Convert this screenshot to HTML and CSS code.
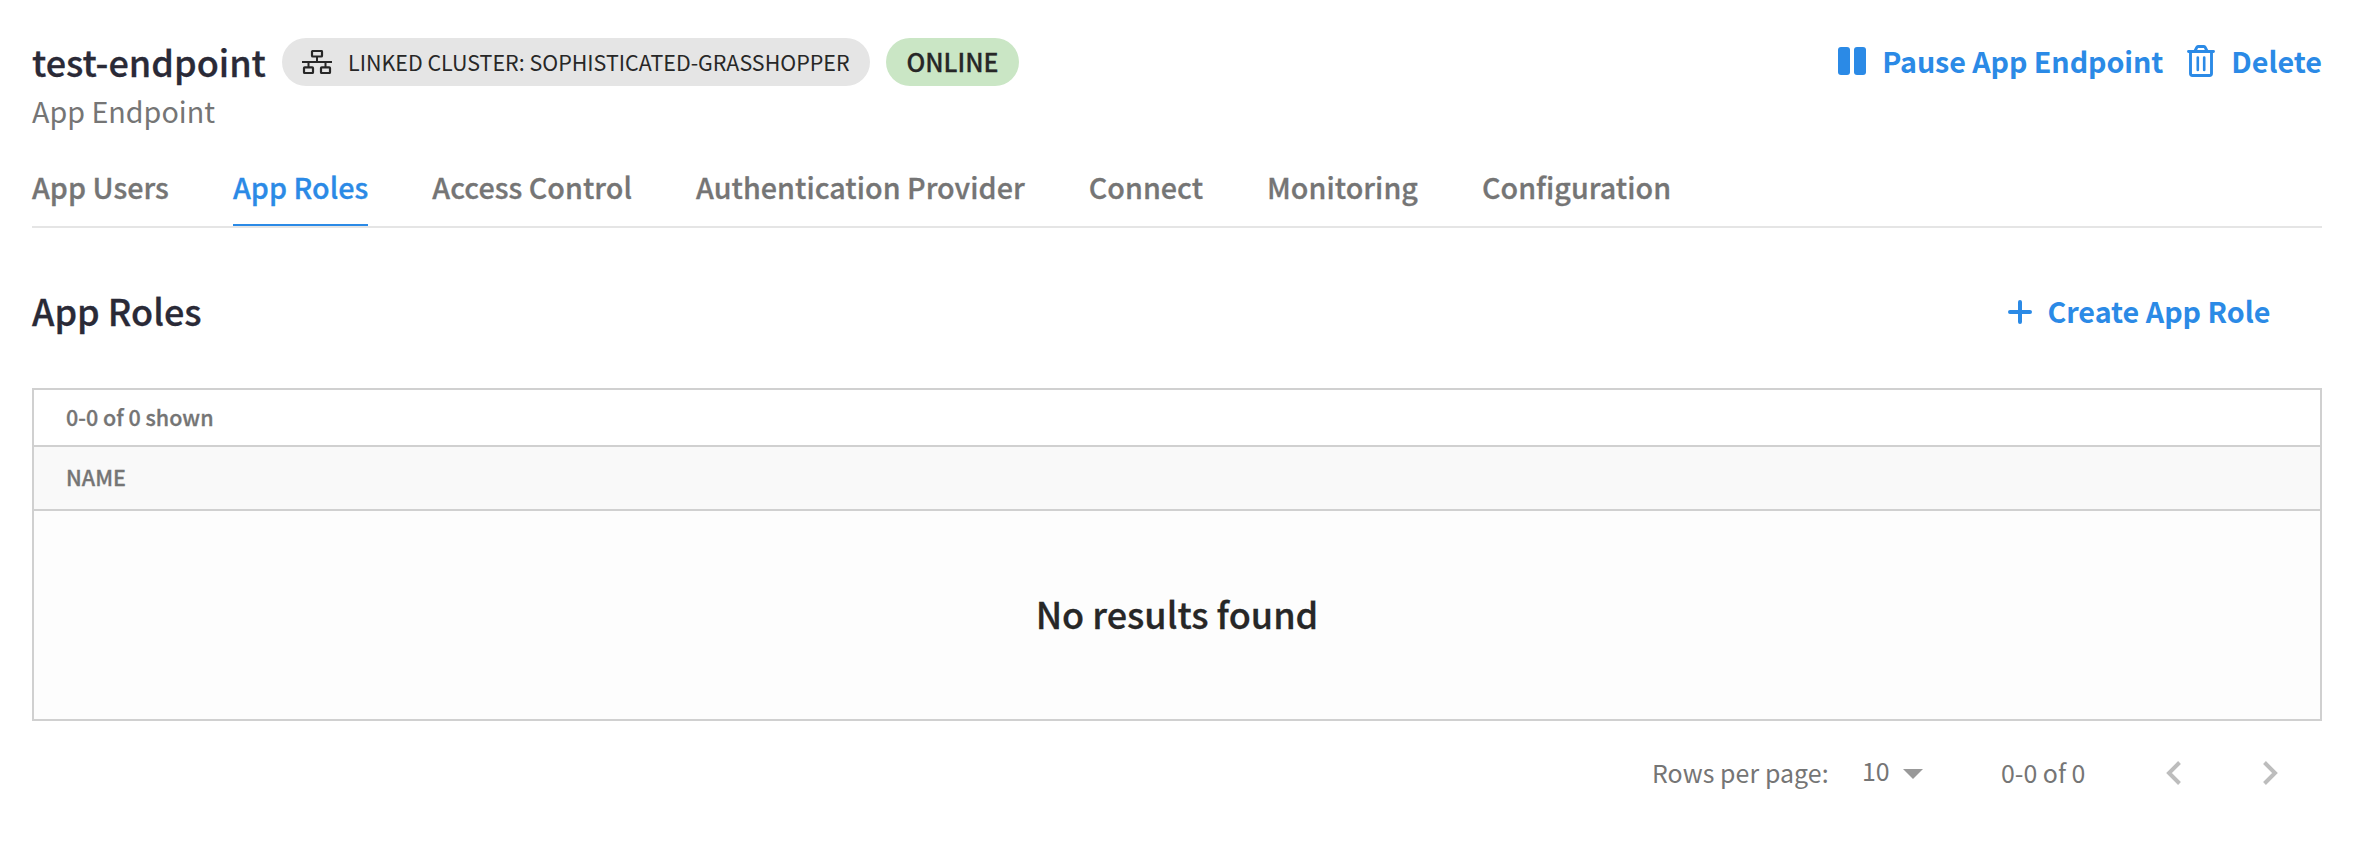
FILE: index.html
```html
<!DOCTYPE html>
<html lang="en">
<head>
<meta charset="utf-8">
<title>test-endpoint</title>
<link rel="stylesheet" href="styles.css">
</head>
<body>
<main class="page">
  <header class="header">
    <div class="heading">
      <h1 class="title">test-endpoint</h1>
      <span class="pill">
        <svg class="cluster-icon" width="30" height="24" viewBox="0 0 30 24" fill="none" stroke="#272727"><rect x="10" y="1" width="10" height="5.500" rx=".8" stroke-width="2.200"/><path d="M15 6.500V12M0 12H30M6.500 12V17M23.500 12V17" stroke-width="2"/><rect x="2" y="17.300" width="9" height="5.700" rx=".8" stroke-width="2.200"/><rect x="19" y="17.300" width="9" height="5.700" rx=".8" stroke-width="2.200"/></svg>
        <span class="pill-text">LINKED CLUSTER: SOPHISTICATED-GRASSHOPPER</span>
      </span>
      <span class="status">ONLINE</span>
    </div>
    <div class="actions">
      <button class="action"><svg class="pause-icon" width="28" height="28" viewBox="0 0 28 28" fill="currentColor"><rect width="12" height="28" rx="3"/><rect x="16" width="12" height="28" rx="3"/></svg><span class="t-pause">Pause App Endpoint</span></button>
      <button class="action"><svg class="trash-icon" width="28" height="32" viewBox="0 0 28 32" fill="none" stroke="currentColor"><path d="M1.500 6.500H26.500M8 6L9.800 2.300Q10.200 1.500 11 1.500H17Q17.800 1.500 18.200 2.300L20 6M3.500 7V28.500Q3.500 30.500 5.500 30.500H22.500Q24.500 30.500 24.500 28.500V7" stroke-width="2.900" stroke-linecap="round"/><path d="M10.800 12.500V25M17.200 12.500V25" stroke-width="2.600" stroke-linecap="round"/></svg><span class="t-delete">Delete</span></button>
    </div>
  </header>
  <p class="subtitle">App Endpoint</p>
  <nav class="tabs">
    <a class="tab">App Users</a>
    <a class="tab active">App Roles</a>
    <a class="tab">Access Control</a>
    <a class="tab">Authentication Provider</a>
    <a class="tab">Connect</a>
    <a class="tab">Monitoring</a>
    <a class="tab">Configuration</a>
  </nav>
  <section class="section-head">
    <h2 class="section-title">App Roles</h2>
    <button class="action create"><svg class="plus-icon" width="24" height="24" viewBox="0 0 24 24" stroke="currentColor" stroke-width="4" stroke-linecap="round"><path d="M2 12H22M12 2V22"/></svg><span class="t-create">Create App Role</span></button>
  </section>
  <section class="table">
    <div class="count">0-0 of 0 shown</div>
    <div class="columns">NAME</div>
    <div class="empty">No results found</div>
  </section>
  <footer class="pager">
    <span class="rows-label">Rows per page:</span>
    <span class="rows-value">10</span>
    <svg class="caret" width="20" height="10" viewBox="0 0 20 10"><path d="M0 0H20L10 10Z" fill="#999"/></svg>
    <span class="range">0-0 of 0</span>
    <svg class="chev" width="15" height="24" viewBox="0 0 15 24" fill="none" stroke="#bdbdbd" stroke-width="4"><path d="M13.500 1.500L3 12L13.500 22.500"/></svg>
    <svg class="chev next" width="15" height="24" viewBox="0 0 15 24" fill="none" stroke="#bdbdbd" stroke-width="4"><path d="M1.500 1.500L12 12L1.500 22.500"/></svg>
  </footer>
</main>
</body>
</html>
```
FILE: styles.css
```css
* { box-sizing: border-box; }
body { margin: 0; background: #fff; color: #272727; font-family: "Noto Sans CJK SC", "Open Sans", sans-serif; }
h1, h2, p { margin: 0; }
button { border: 0; padding: 0; background: none; font: inherit; color: inherit; }
svg { display: block; flex: none; }
.page { width: 2290px; margin-left: 32px; padding-top: 38px; white-space: nowrap; }
.title, .status, .tab, .section-title, .table { -webkit-text-stroke: .3px currentColor; }
.header { display: flex; justify-content: space-between; height: 48px; }
.heading { display: flex; align-items: center; }
.title { width: 250px; padding-bottom: 2px; color: #2a2a37; font-size: 36px; font-weight: 500; line-height: 46px; }
.pill { display: flex; align-items: center; width: 588px; height: 48px; padding-left: 20px; border-radius: 24px; background: #e5e5e5; }
.pill-text { margin-left: 16px; font-size: 21.450px; line-height: 48px; }
.status { width: 133px; height: 48px; margin-left: 16px; border-radius: 24px; background: #cae6c5; text-align: center; font-size: 25px; font-weight: 500; line-height: 47px; }
.actions { display: flex; gap: 24px; }
.action { display: flex; align-items: center; color: #2b8ae6; font-size: 28.700px; font-weight: 700; line-height: 46px; }
.action span { padding-bottom: 2px; }
.pause-icon { margin: -2px 16px 0 0; }
.trash-icon { margin: -2px 16px 0 0; }
.t-pause { letter-spacing: -.08px; }
.subtitle { height: 52px; color: #757575; font-size: 28.700px; line-height: 50px; }
.tabs { display: flex; gap: 64px; height: 90px; border-bottom: 2px solid #e5e5e5; }
.tab { height: 88px; padding-top: 25px; color: #757575; font-size: 28.700px; font-weight: 500; line-height: 48px; letter-spacing: .03px; }
.tab.active { color: #2b8ae6; border-bottom: 2px solid #2b8ae6; }
.section-head { display: flex; justify-content: space-between; align-items: center; height: 160px; padding: 8px 51.500px 0 0; }
.section-title { padding-bottom: 4px; color: #2a2a37; font-size: 36px; font-weight: 500; line-height: 46px; }
.plus-icon { margin-right: 15px; }
.table { border: 2px solid #d0d0d0; color: #757575; font-size: 21.500px; font-weight: 500; }
.count { height: 57px; padding-left: 32px; border-bottom: 2px solid #d0d0d0; line-height: 53px; }
.columns { height: 64px; padding-left: 32px; border-bottom: 2px solid #d0d0d0; background: #f9f9f9; line-height: 60px; }
.empty { height: 208px; background: #fdfdfd; color: #272727; text-align: center; font-size: 36px; line-height: 205px; }
.pager { display: flex; align-items: center; height: 106px; padding-left: 1620px; color: #757575; font-size: 24.900px; line-height: 46px; }
.rows-label { width: 210px; padding-bottom: 4px; letter-spacing: .08px; }
.rows-value { width: 41px; padding-bottom: 8px; }
.range { width: 165px; margin-left: 78px; padding-bottom: 4px; }
.chev { margin-top: -3px; }
.next { margin-left: 82px; }
```
